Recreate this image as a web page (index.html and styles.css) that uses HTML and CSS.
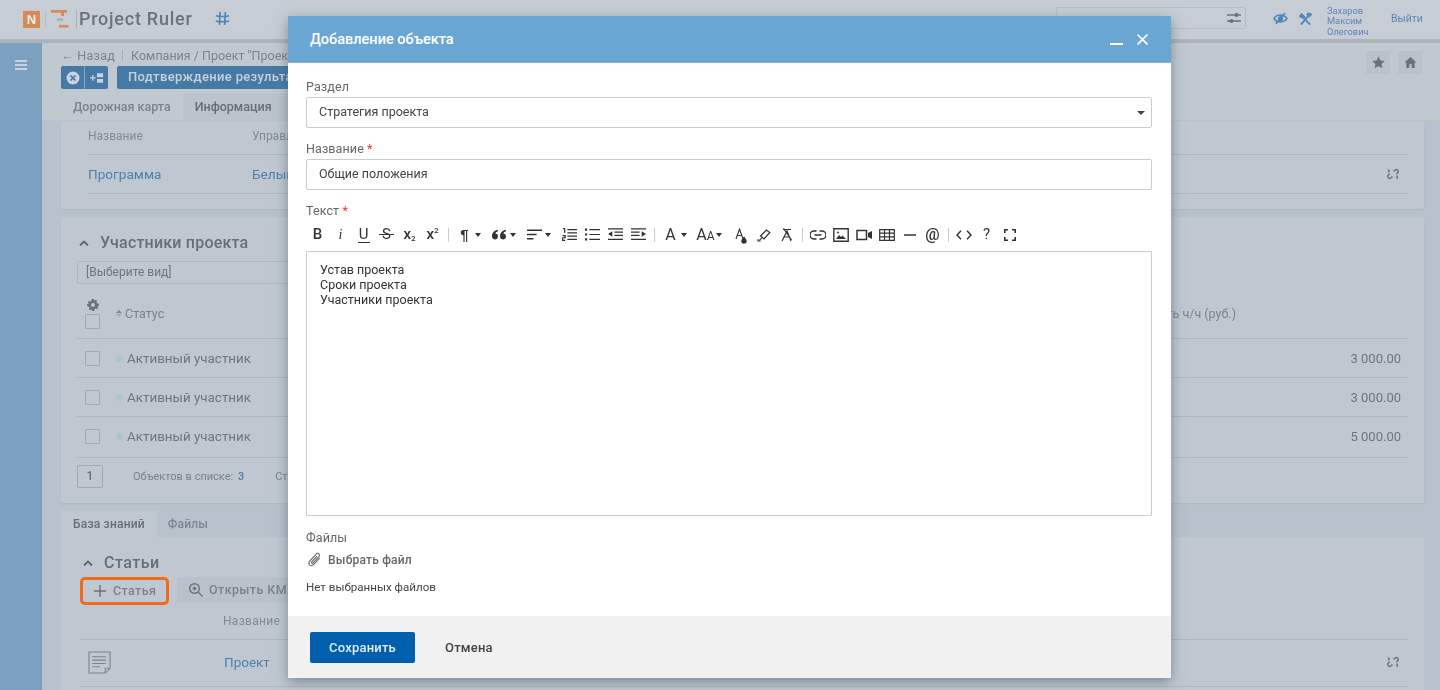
FILE: index.html
```html
<!DOCTYPE html>
<html lang="ru">
<head>
<meta charset="utf-8">
<title>Project Ruler</title>
<link rel="stylesheet" href="styles.css">
</head>
<body>
<div class="app">
  <header class="topbar">
    <div class="logo-n">N</div>
    <div class="logo-sep"></div>
    <svg class="logo-g" viewBox="0 0 18 18"><path d="M0 0h16v2.800H0zM10 2.800h3V6h-3zM8 15h9.500v2.400H8z" fill="#d9895a"/><path d="M6 8.500h6v2.200H6z" fill="#a9aeb0"/></svg>
    <div class="logo-div"></div>
    <div class="brand">Project Ruler</div>
    <svg class="hash" viewBox="0 0 16 16" fill="none" stroke="#4f86b8" stroke-width="1.700"><path d="M5.500 1 4.800 15M11 1l-.7 14M1 5c3 1.200 10 1.200 14 0M1 10.600c3 1.200 10 1.200 14 0"/></svg>
    <div class="search">
      <svg class="search-i" viewBox="0 0 14 12" fill="none" stroke="#69727c" stroke-width="1.400"><path d="M0 3h14M0 9h14"/><circle cx="9.500" cy="3" r="1.300" fill="#69727c"/><circle cx="4.500" cy="9" r="1.300" fill="#69727c"/></svg>
    </div>
    <svg class="eye" viewBox="0 0 16 14" fill="none" stroke="#4f86b8" stroke-width="1.600"><path d="M1 7c3-5 10-5 14 0-4 5-11 5-14 0z"/><circle cx="8" cy="7" r="2" fill="#4f86b8"/><path d="M13 1 3 13"/></svg>
    <svg class="tools" viewBox="0 0 14 14" fill="none" stroke="#4f86b8" stroke-width="2"><path d="M2 13 10 4M1 4l2-2 3 3-1 1zM12 13 3 4M9 2c1-1.300 3-1 4 0l-2 2z"/></svg>
    <div class="user">Захаров<br>Максим<br>Олегович</div>
    <div class="logout">Выйти</div>
  </header>
  <div class="main">
    <aside class="sidebar">
      <div class="burger"><span></span><span></span><span></span></div>
    </aside>
    <div class="content">
      <div class="top-panel">
        <div class="top-row">
          <div class="top-left">
            <div class="crumbs"><span class="back">← Назад</span><span class="crumb-sep"></span><span>Компания / Проект "Проект"</span></div>
            <div class="actions">
              <div class="btn-pair">
                <div class="btn-icon"><svg viewBox="0 0 14 14"><circle cx="7" cy="7" r="6.500" fill="#c8d3dd"/><path d="M4.500 4.500l5 5M9.500 4.500l-5 5" stroke="#44789f" stroke-width="1.700"/></svg></div>
                <div class="btn-icon"><svg viewBox="0 0 16 14" fill="#c8d3dd"><path d="M0 6h2.500V3.500H4V6h2.500v1.500H4V10H2.500V7.500H0z"/><path d="M8 1.500h7v4.500H8zM8 8h7v4.500H8z"/></svg></div>
              </div>
              <div class="btn-main">Подтверждение результатов</div>
            </div>
          </div>
          <div class="top-right">
            <div class="btn-ghost"><svg viewBox="0 0 14 14" fill="#69727c"><path d="m7 .5 2 4.300 4.700.6-3.400 3.200.9 4.700L7 11l-4.200 2.300.9-4.700L.3 5.400 5 4.800z"/></svg></div>
            <div class="btn-ghost"><svg viewBox="0 0 14 14" fill="#69727c"><path d="M7 1 .5 7H2.500v6h3.200V9h2.600v4h3.200V7h2z"/></svg></div>
          </div>
        </div>
        <div class="page-tabs">
          <div class="page-tab">Дорожная карта</div>
          <div class="page-tab active">Информация</div>
        </div>
      </div>
      <div class="lower">
        <section class="card card-top">
          <div class="row head-row"><span class="col-name">Название</span><span>Управляющий</span></div>
          <div class="row prog-row"><span class="col-name link">Программа</span><span class="link">Белый</span><svg class="broken" viewBox="0 0 12 12" fill="none" stroke="#69727c" stroke-width="1.400"><path d="M6.500 3.500 8 2a2 2 0 0 1 2.800 2.800L9.300 6.300M5.500 8.500 4 10a2 2 0 0 1-2.800-2.800l1.500-1.500M1 1.500l1.500 1.500M1 3.800h1.500M10.800 10.500 9.300 9M11 8.200H9.500"/></svg></div>
        </section>
        <section class="card card-team">
          <h2 class="card-title"><svg class="chev" viewBox="0 0 10 6" fill="none" stroke="#5d6670" stroke-width="1.800"><path d="M1 5.500 5 1.500l4 4"/></svg>Участники проекта</h2>
          <div class="view-select">[Выберите вид]</div>
          <div class="tr tr-head">
            <div class="tick-col"><svg class="gear" viewBox="0 0 12 12" fill="#69727c"><path d="M5 0h2l.3 1.700 1.500-1 1.400 1.400-1 1.500L11.900 5v2l-1.700.3 1 1.500-1.400 1.400-1.500-1L7 12H5l-.3-1.700-1.500 1-1.400-1.400 1-1.500L.1 7V5l1.700-.3-1-1.500 1.400-1.400 1.500 1zM6 4a2 2 0 1 0 0 4 2 2 0 0 0 0-4z"/></svg><span class="check"></span></div>
            <div class="sort"><span class="sort-up"></span><span class="sort-down"></span></div>
            <span class="th">Статус</span>
            <span class="th th-cost">Стоимость ч/ч (руб.)</span>
          </div>
          <div class="tr"><div class="tick-col"><span class="check"></span></div><span class="dot"></span><span>Активный участник</span><span class="num">3 000.00</span></div>
          <div class="tr"><div class="tick-col"><span class="check"></span></div><span class="dot"></span><span>Активный участник</span><span class="num">3 000.00</span></div>
          <div class="tr tr-last"><div class="tick-col"><span class="check"></span></div><span class="dot"></span><span>Активный участник</span><span class="num">5 000.00</span></div>
          <div class="pager"><span class="page-box">1</span><span class="count">Объектов в списке: <b>3</b></span><span class="count">Страница</span></div>
        </section>
        <div class="kb-tabs">
          <div class="kb-tab active">База знаний</div>
          <div class="kb-tab">Файлы</div>
        </div>
        <section class="card card-kb">
          <h2 class="card-title kb-title"><svg class="chev" viewBox="0 0 10 6" fill="none" stroke="#5d6670" stroke-width="1.800"><path d="M1 5.500 5 1.500l4 4"/></svg>Статьи</h2>
          <div class="kb-actions">
            <div class="kb-btn highlighted"><svg viewBox="0 0 12 12" stroke="#69727c" stroke-width="1.400"><path d="M6 0v12M0 6h12"/></svg>Статья</div>
            <div class="kb-btn plain"><svg viewBox="0 0 14 14" fill="none" stroke="#69727c" stroke-width="1.400"><circle cx="5.500" cy="5.500" r="4.800"/><path d="M9 9l4.500 4.500M3.500 5.500h4M5.500 3.500v4"/></svg>Открыть КМ</div>
          </div>
          <div class="kb-head">Название</div>
          <div class="kb-row">
            <svg class="doc" viewBox="0 0 24 24" fill="none" stroke="#7a838c" stroke-width="1.100"><path d="M1 1h22v17l-5 5H1zM23 18h-5v5M4.500 6h14M4.500 9.500h14M4.500 13h14M4.500 16.500h8"/></svg>
            <span class="link">Проект</span>
            <svg class="broken" viewBox="0 0 12 12" fill="none" stroke="#69727c" stroke-width="1.400"><path d="M6.500 3.500 8 2a2 2 0 0 1 2.800 2.800L9.300 6.300M5.500 8.500 4 10a2 2 0 0 1-2.800-2.800l1.500-1.500M1 1.500l1.500 1.500M1 3.800h1.500M10.800 10.500 9.300 9M11 8.200H9.500"/></svg>
          </div>
        </section>
      </div>
    </div>
  </div>
</div>

<div class="modal">
  <div class="modal-head">
    <span class="modal-title">Добавление объекта</span>
    <span class="min-btn"></span>
    <svg class="close-btn" viewBox="0 0 10 10" stroke="#fff" stroke-width="1.500"><path d="M.5.5l9 9M9.500.5l-9 9"/></svg>
  </div>
  <div class="modal-body">
    <label class="lbl lbl-first">Раздел</label>
    <div class="field">Стратегия проекта<span class="caret"></span></div>
    <label class="lbl">Название <i>*</i></label>
    <div class="field">Общие положения</div>
    <label class="lbl">Текст <i>*</i></label>
    <div class="toolbar">
      <span class="tb t-b">B</span>
      <span class="tb t-i">i</span>
      <span class="tb t-u">U</span>
      <span class="tb t-s">S</span>
      <span class="tb t-x">x<sub>2</sub></span>
      <span class="tb t-x">x<sup>2</sup></span>
      <span class="tsep"></span>
      <span class="tb tw t-p">¶<em></em></span>
      <span class="tb tw"><svg viewBox="0 0 14 10" fill="#333"><path d="M0 6.500C0 3 2.500 1 5.500.5V2C4 2.500 3.300 3.300 3.200 4A2.800 2.800 0 1 1 0 6.500zM7.500 6.500C7.500 3 10 1 13 .5V2c-1.500.5-2.200 1.300-2.300 2a2.800 2.800 0 1 1-3.200 2.500z"/></svg><em></em></span>
      <span class="tb tw"><svg viewBox="0 0 14 10" fill="none" stroke="#333" stroke-width="1.300"><path d="M0 1h14M0 5h9M0 9h6"/></svg><em></em></span>
      <span class="tb"><svg viewBox="0 0 14 12" fill="none" stroke="#333" stroke-width="1.100"><path d="M5 1.500h9M5 4.500h9M5 7.500h9M5 10.500h9M1 .5h1.500v4M.5 7h2.500v2H.5v2.500H3"/></svg></span>
      <span class="tb"><svg viewBox="0 0 14 12" fill="none" stroke="#333" stroke-width="1.100"><path d="M4 1.500h10M4 6h10M4 10.500h10"/><path d="M0 .5h2v2H0zM0 5h2v2H0zM0 9.500h2v2H0z" fill="#333" stroke="none"/></svg></span>
      <span class="tb"><svg viewBox="0 0 14 12" fill="none" stroke="#333" stroke-width="1.100"><path d="M0 .8h14M6 3.800h8M6 6.800h8M0 10.500h14"/><path d="M4 3v5L0 5.500z" fill="#333" stroke="none"/></svg></span>
      <span class="tb"><svg viewBox="0 0 14 12" fill="none" stroke="#333" stroke-width="1.100"><path d="M0 .8h14M0 3.800h8M0 6.800h8M0 10.500h14"/><path d="M10 3v5l4-2.500z" fill="#333" stroke="none"/></svg></span>
      <span class="tsep"></span>
      <span class="tb tw t-a">A<em></em></span>
      <span class="tb tw t-a">A<small>A</small><em></em></span>
      <span class="tb"><svg class="ic-tall" viewBox="0 0 12 16" fill="none" stroke="#333" stroke-width="1.100"><path d="M1 11 4.500 1 8 11M2.300 7.500h4.500"/><path d="M9 8.500c1.500 2 2.700 3 2.700 4.500a2.700 2.700 0 0 1-5.400 0c0-1.500 1.200-2.500 2.700-4.500z" fill="#333" stroke="none"/></svg></span>
      <span class="tb"><svg class="ic-big" viewBox="0 0 14 14" fill="none" stroke="#333" stroke-width="1.200"><path d="M3.500 8 9.500 2l3.300 2.500L7 11z"/><path d="M5 9.500 3 12H0"/><path d="M.5 13h3" stroke-width="1"/></svg></span>
      <span class="tb"><svg class="ic-big" viewBox="0 0 12 14" fill="none" stroke="#333" stroke-width="1.200"><path d="M1 13 6 3l4 10M3 9h5.500M2.500.5 10.500 12M2 1.500h8"/></svg></span>
      <span class="tsep tsep-n"></span>
      <span class="tb"><svg class="ic-wide" viewBox="0 0 16 10" fill="none" stroke="#333" stroke-width="1.500"><path d="M6.500 1H4a4 4 0 0 0 0 8h2.500M9.500 1H12a4 4 0 0 1 0 8H9.500M4.500 5h7"/></svg></span>
      <span class="tb"><svg class="ic-img" viewBox="0 0 16 14" fill="none" stroke="#333" stroke-width="1.400"><path d="M.8.8h14.400v12.400H.8z"/><path d="M3 11l3-4 2 2 1.500-1.500L13 11z" fill="#333" stroke="none"/><circle cx="5" cy="4.500" r="1" fill="#333" stroke="none"/></svg></span>
      <span class="tb"><svg class="ic-wide" viewBox="0 0 16 12" fill="none" stroke="#333" stroke-width="1.500"><path d="M1 1.500h9.500v9H1z"/><path d="M16 2v8l-4-2V4z" fill="#333" stroke="none"/></svg></span>
      <span class="tb"><svg class="ic-wide" viewBox="0 0 16 12" fill="none" stroke="#333" stroke-width="1.200"><path d="M.7.7h14.600v10.600H.7zM.7 4.200h14.600M.7 7.800h14.600M5.500.7v10.600M10.500.7v10.600"/></svg></span>
      <span class="tb"><svg class="ic-hr" viewBox="0 0 12 2" stroke="#333" stroke-width="1.500"><path d="M0 1h12"/></svg></span>
      <span class="tb t-at">@</span>
      <span class="tsep tsep-n"></span>
      <span class="tb"><svg class="ic-wide" viewBox="0 0 16 10" fill="none" stroke="#333" stroke-width="1.500"><path d="M5 .8 1 5l4 4.200M11 .8 15 5l-4 4.200"/></svg></span>
      <span class="tb t-q">?</span>
      <span class="tb"><svg class="ic-fs" viewBox="0 0 12 12" fill="none" stroke="#333" stroke-width="1.600"><path d="M.8 4V.8H4M8 .8h3.200V4M11.200 8v3.200H8M4 11.200H.8V8"/></svg></span>
    </div>
    <div class="editor">Устав проекта<br>Сроки проекта<br>Участники проекта</div>
    <label class="lbl lbl-files">Файлы</label>
    <div class="pick"><svg viewBox="0 0 14 16" fill="none" stroke="#777" stroke-width="1.300"><path d="M12.500 6.500 6.500 13c-1.500 1.700-3.500 2-4.700.8S.7 11 2.200 9.300L8.500 2.500c1-1.100 2.400-1.400 3.300-.5s.6 2.200-.4 3.300L5.500 11.500c-.5.600-1.200.8-1.600.4s-.2-1.100.3-1.700L9.500 4.500"/></svg>Выбрать файл</div>
    <div class="no-files">Нет выбранных файлов</div>
  </div>
  <div class="modal-foot">
    <div class="save">Сохранить</div>
    <div class="cancel">Отмена</div>
  </div>
</div>
</body>
</html>
```
FILE: styles.css
```css
* { box-sizing: border-box; }
html, body { margin: 0; height: 690px; overflow: hidden; }
body { font-family: Roboto, "Liberation Sans", sans-serif; font-size: 14px; color: #333; background: #b8c2cc; }

.app { height: 690px; display: flex; flex-direction: column; color: #6d7680; filter: blur(.6px); overflow: hidden; }

.topbar { flex: none; height: 43px; background: #c6cdd4; border-bottom: 4px solid #abb3bb; display: flex; align-items: center; padding-left: 23px; }
.logo-n { width: 17px; height: 17px; margin-top: -1px; background: #d78a57; color: #eee; font: 700 13px/17px "Liberation Sans", sans-serif; text-align: center; }
.logo-sep { width: 1px; height: 16px; margin: -1px 0 0 5px; background: #b6bec6; }
.logo-g { width: 18px; height: 18px; margin: -1px 0 0 5px; }
.logo-div { width: 1px; height: 18px; margin: -2px 0 0 7px; background: #a8b0b8; }
.brand { margin: -2px 0 0 1px; padding-left: 1px; font: 500 18px/20px Roboto, sans-serif; letter-spacing: .75px; color: #6a737d; width: 125px; }
.hash { width: 15px; height: 15px; margin: -2px 0 0 12px; }
.search { width: 190px; height: 22px; margin: -3px 0 0 826px; border: 1px solid #b6bdc5; border-radius: 2px; display: flex; align-items: center; justify-content: flex-end; padding-right: 4px; }
.search-i { width: 14px; height: 12px; }
.eye { width: 15px; height: 13px; margin: -2px 0 0 27px; }
.tools { width: 13px; height: 14px; margin: -2px 0 0 11px; }
.user { width: 64px; margin: 4px 0 0 15px; font-size: 9.300px; line-height: 10.500px; color: #5d87b8; }
.logout { margin-top: -2px; font-size: 10.500px; color: #5d87b8; }

.main { flex: 1; display: flex; min-height: 0; }
.sidebar { width: 42px; flex: none; background: #7ba0c0; padding: 17px 15px; }
.burger { display: flex; flex-direction: column; gap: 2px; }
.burger span { height: 2px; width: 12px; background: #c7d3de; }
.content { flex: 1; min-width: 0; background: #b8c2cc; }

.top-panel { height: 77px; background: #c1c9d0; padding: 0 16px 0 19px; }
.top-row { display: flex; height: 46px; justify-content: space-between; }
.top-left { flex: 1; min-width: 0; }
.top-right { display: flex; gap: 8px; padding: 8px 2px 0 0; }
.crumbs { height: 23px; display: flex; align-items: center; padding-top: 1px; font-size: 12.500px; color: #7a838c; }
.back { letter-spacing: .3px; }
.crumb-sep { width: 1px; height: 11px; margin: 0 8px 0 7px; background: #a5adb5; }
.actions { display: flex; height: 23px; align-items: stretch; }
.btn-pair { display: flex; width: 47px; background: #467aa6; border-radius: 2px; }
.btn-icon { flex: 1; display: flex; align-items: center; justify-content: center; }
.btn-icon + .btn-icon { border-left: 1px solid #8aa7c0; }
.btn-icon svg { width: 14px; height: 14px; }
.btn-main { margin-left: 9px; width: 300px; padding-left: 11px; background: #467aa6; border-radius: 2px; color: #c5d1dc; font: 500 13px/21px Roboto, sans-serif; letter-spacing: .35px; }
.btn-ghost { width: 24px; height: 23px; background: #b9c2cb; display: flex; align-items: center; justify-content: center; }
.btn-ghost svg { width: 13px; height: 13px; }

.page-tabs { display: flex; height: 27px; margin-top: 4px; }
.page-tab { padding: 0 12px; font: 500 12.500px/27px Roboto, sans-serif; color: #7a838c; }
.page-tab.active { background: #bbc4cd; color: #656e78; width: 300px; }

.lower { padding: 1px 16px 0 19px; }
.card { background: #bfc8d1; }
.card-top { height: 88px; padding: 0 16px 0 27px; box-shadow: 0 1px 2px #aeb7c1; border-radius: 2px; }
.row { display: flex; align-items: center; position: relative; }
.head-row { height: 34px; padding-bottom: 4px; font-size: 12px; color: #828b94; border-bottom: 1px solid #aeb7c0; }
.prog-row { height: 39px; font-size: 13.600px; border-bottom: 1px solid #aeb7c0; }
.col-name { width: 164px; }
.link { color: #4f81ab; }
.broken { width: 12px; height: 12px; position: absolute; right: 9px; }

.card-team { height: 286px; margin-top: 8px; padding: 16px 16px 0 16px; box-shadow: 0 1px 2px #aeb7c1; border-radius: 2px; position: relative; }
.card-title { margin: 0 0 0 2px; display: flex; align-items: center; font: 500 16px/20px Roboto, sans-serif; letter-spacing: .2px; color: #666f79; }
.chev { width: 10px; height: 6px; margin-right: 11px; }
.view-select { height: 23px; margin-top: 8px; width: 300px; border: 1px solid #aeb7c0; border-radius: 2px; padding-left: 8px; font-size: 12px; line-height: 21px; color: #6d7680; }
.tr { height: 39px; display: flex; align-items: center; border-bottom: 1px solid #aeb7c0; font-size: 13.400px; color: #6d7680; }
.tr-head { height: 55px; padding-top: 5px; font-size: 12.500px; }
.tr-last { height: 41px; padding-bottom: 2px; }
.tick-col { width: 39px; padding-left: 8px; display: flex; flex-direction: column; align-items: flex-start; gap: 3px; }
.check { display: block; width: 15px; height: 15px; border: 1px solid #a0a9b2; border-radius: 1px; }
.gear { width: 12px; height: 12px; margin-left: 2px; }
.sort { width: 6px; margin-right: 3px; display: flex; flex-direction: column; gap: 1px; }
.sort-up { border: 3px solid transparent; border-top: 0; border-bottom: 3px solid #7a838c; }
.sort-down { border: 3px solid transparent; border-bottom: 0; border-top: 3px solid #a2abb4; }
.th { color: #7a838c; }
.th-cost { margin-left: auto; margin-right: 172px; }
.dot { width: 7px; height: 7px; border-radius: 50%; background: #a9c9c3; margin-right: 4px; }
.num { margin-left: auto; margin-right: 7px; font-size: 13px; }
.pager { display: flex; align-items: center; height: 30px; font-size: 11px; color: #7a838c; padding-top: 6px; }
.page-box { width: 26px; height: 23px; border: 1px solid #a0a9b2; border-radius: 2px; text-align: center; line-height: 21px; font-size: 12px; font-weight: 500; color: #666f79; }
.count { margin-left: 30px; }
.count + .count { margin-left: 31px; }
.count b { font-weight: 500; color: #4f81ab; margin-left: 2px; }

.kb-tabs { display: flex; height: 26px; margin-top: 8px; }
.kb-tab { padding: 0 12px; font: 500 12px/26px Roboto, sans-serif; letter-spacing: .2px; color: #7d868f; }
.kb-tab.active { background: #bfc8d1; color: #666f79; }
.kb-tab + .kb-tab { padding-left: 11px; }
.card-kb { height: 160px; padding: 16px 16px 0 20px; }
.kb-title { margin: 0; letter-spacing: .5px; }
.kb-title .chev { margin-right: 11px; margin-left: 2px; }
.kb-actions { display: flex; margin-top: 4px; height: 28px; gap: 8px; margin-left: -1px; }
.kb-btn { display: flex; align-items: center; font: 500 12.500px/1 Roboto, sans-serif; letter-spacing: .4px; color: #7a838c; }
.kb-btn svg { width: 12px; height: 12px; margin-right: 7px; }
.highlighted { width: 89px; border: 3px solid #f26a1b; border-radius: 5px; padding-left: 11px; background: #bfc8d1; }
.plain { width: 300px; height: 26px; padding-left: 12px; background: #b9c2cb; }
.kb-btn.plain svg { width: 14px; height: 14px; margin-right: 6px; }
.kb-head { height: 35px; padding: 9px 0 0 143px; font-size: 12px; letter-spacing: .3px; color: #828b94; border-bottom: 1px solid #aeb7c0; margin-left: -1px; }
.kb-row { position: relative; height: 47px; padding-bottom: 2px; display: flex; align-items: center; margin-left: -1px; font-size: 13.500px; border-bottom: 1px solid #aeb7c0; }
.doc { width: 23px; height: 23px; margin: 0 113px 0 8px; }

.modal { position: absolute; left: 288px; top: 16px; width: 883px; height: 662px; display: flex; flex-direction: column; background: #fff; box-shadow: 0 4px 12px rgba(70, 85, 100, .55); filter: blur(.35px); }
.modal-head { flex: none; height: 47px; background: #6aa6d3; display: flex; align-items: center; padding-left: 22px; color: #fff; border-bottom: 1px solid #7fb3da; }
.modal-title { flex: 1; font-size: 14.500px; font-weight: 500; }
.min-btn { width: 13px; height: 2px; background: #fff; margin: 9px 14px 0 0; }
.close-btn { width: 11px; height: 11px; margin-right: 23px; }
.modal-body { flex: 1; padding: 0 19px 0 18px; }
.lbl { display: block; height: 20px; padding-top: 2px; font-size: 12.500px; line-height: 15px; letter-spacing: .1px; color: #666; }
.lbl i { color: #e33; font-style: normal; }
.lbl-first { margin-top: 14px; }
.field { position: relative; height: 31px; margin-bottom: 11px; padding-left: 12px; border: 1px solid #ccc; border-radius: 2px; font-size: 12.500px; line-height: 27px; color: #444; }
.caret { position: absolute; right: 6px; top: 13px; border: 4px solid transparent; border-bottom: 0; border-top: 4px solid #444; }
.toolbar { display: flex; height: 23px; margin-top: 2px; align-items: center; color: #333; }
.tb { width: 23px; flex: none; height: 20px; display: flex; align-items: center; justify-content: center; font-size: 14px; line-height: 1; }
.tw { width: 35px; padding-right: 12px; position: relative; }
.tw em { position: absolute; right: 7px; top: 8px; border: 3.500px solid transparent; border-bottom: 0; border-top: 4px solid #333; }
.tb svg { width: 15px; height: 13px; }
.tb .ic-tall { width: 12px; height: 16px; margin-top: 3px; }
.tb .ic-big { width: 14px; height: 14px; }
.tb .ic-wide { width: 16px; height: 12px; }
.tb .ic-img { width: 16px; height: 14px; }
.tb .ic-hr { width: 12px; height: 2px; }
.tb .ic-fs { width: 12px; height: 12px; }
.tsep { flex: none; width: 9px; height: 14px; background: linear-gradient(#ccc, #ccc) center / 1px 100% no-repeat; }
.tsep-n { width: 8px; }
.t-b { font-weight: 500; font-size: 15px; }
.t-p { font: 700 15px "Liberation Sans", sans-serif; }
.t-i { font: italic 400 14px "Liberation Serif", serif; }
.t-u { font-size: 15px; background: linear-gradient(#333, #333) center bottom 1px / 12px 1.300px no-repeat; }
.t-s { font-size: 15px; font-weight: 400; background: linear-gradient(#333, #333) center / 15px 1.200px no-repeat; }
.t-x { font-weight: 500; font-size: 15px; }
.t-x sub, .t-x sup { font-size: 8px; line-height: 1; }
.t-x sub { margin-top: 8px; }
.t-x sup { margin-top: -8px; }
.t-a { font-size: 16px; font-weight: 400; }
.t-a small { font-size: 12px; margin-top: 3px; }
.t-at { font-size: 16px; font-weight: 500; }
.t-q { font-size: 15px; font-weight: 400; }
.editor { height: 265px; margin-top: 5px; padding: 10px 13px; border: 1px solid #ccc; border-radius: 1px; font-size: 12.500px; line-height: 15px; color: #333; }
.lbl-files { height: 19px; margin-top: 12px; }
.pick { display: flex; align-items: center; height: 25px; padding-left: 1px; font-size: 12px; font-weight: 500; letter-spacing: .2px; color: #666; }
.pick svg { width: 15px; height: 15px; margin-right: 6px; }
.no-files { margin-top: 8px; font-size: 11.600px; line-height: 15px; color: #444; }
.modal-foot { flex: none; height: 62px; background: #f1f1f1; display: flex; align-items: center; padding: 0 0 0 22px; }
.save { width: 105px; height: 31px; background: #0060ae; border-radius: 2px; color: #e4eef6; text-align: center; font-size: 13px; font-weight: 500; line-height: 31px; letter-spacing: .2px; }
.cancel { margin-left: 30px; font-size: 13px; font-weight: 500; letter-spacing: .2px; color: #444; }
```
